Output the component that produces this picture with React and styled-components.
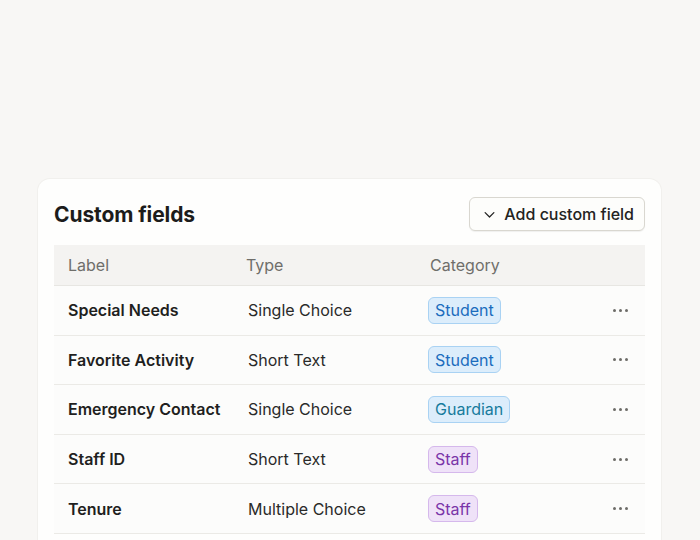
import React from 'react'
import styled, { createGlobalStyle } from 'styled-components'

const GlobalStyle = createGlobalStyle`
  html, body {
    margin: 0;
    background: #f8f7f5;
    font-family: Inter, "Noto Sans", sans-serif;
    color: #1f1f1e;
  }
`

const Page = styled.div`
  padding: 179px 39px 0 38px;
  block-size: 540px;
  box-sizing: border-box;
  overflow: hidden;
`

const Card = styled.section`
  background: #fefefd;
  border-radius: 12px;
  box-shadow: 0 0 0 1px #f1f0ed;
  padding: 18px 16px 40px;
`

const Header = styled.div`
  display: flex;
  align-items: center;
  justify-content: space-between;
  margin-block-end: 14px;

  h2 {
    margin: 0;
    font-size: 21px;
    font-weight: 700;
    letter-spacing: -0.1px;
    color: #1c1c1b;
  }
`

const AddButton = styled.button`
  display: flex;
  align-items: center;
  gap: 7px;
  block-size: 34px;
  padding: 0 10px 0 12px;
  background: #fdfdfb;
  border: 1px solid #d9d7d0;
  border-radius: 6px;
  box-shadow: 0 1px 1px rgba(0,0,0,0.06);
  font: 500 16px Inter, sans-serif;
  color: #232322;
  cursor: pointer;
`

const Table = styled.div`
  display: grid;
  grid-template-columns: 178px 184px 1fr 48px;
`

const HeadCell = styled.div`
  background: #f4f3f1;
  block-size: 40px;
  display: flex;
  align-items: center;
  padding-inline-start: 14px;
  font-size: 16px;
  color: #6f6e6a;
  border-bottom: 1px solid #e7e6e2;
`

const Cell = styled.div`
  block-size: 48.6px;
  display: flex;
  align-items: center;
  padding-inline-start: ${({ pad }) => pad || '14px'};
  font-size: 16px;
  font-weight: ${({ strong }) => (strong ? 600 : 400)};
  color: ${({ strong }) => (strong ? '#1f1f1e' : '#2a2a29')};
  background: #fcfcfb;
  border-bottom: 1px solid #ebeae6;
`

const tones = {
  Student: { bg: '#dcedfb', border: '#a9d2f3', color: '#1b6cbd' },
  Guardian: { bg: '#dcedfb', border: '#a9d2f3', color: '#177b9c' },
  Staff: { bg: '#efe2f8', border: '#d5b8ec', color: '#7a35a8' },
}

const Badge = styled.span`
  display: inline-flex;
  align-items: center;
  block-size: 27px;
  box-sizing: border-box;
  padding: 0 6px;
  border-radius: 6px;
  font-size: 16px;
  background: ${({ tone }) => tones[tone].bg};
  border: 1px solid ${({ tone }) => tones[tone].border};
  color: ${({ tone }) => tones[tone].color};
`

const Dots = styled.button`
  border: 0;
  background: none;
  padding: 0;
  display: flex;
  gap: 3px;
  cursor: pointer;

  span {
    inline-size: 3px;
    block-size: 3px;
    border-radius: 50%;
    background: #6d6c68;
  }
`

const rows = [
  { label: 'Special Needs', type: 'Single Choice', category: 'Student' },
  { label: 'Favorite Activity', type: 'Short Text', category: 'Student' },
  { label: 'Emergency Contact', type: 'Single Choice', category: 'Guardian' },
  { label: 'Staff ID', type: 'Short Text', category: 'Staff' },
  { label: 'Tenure', type: 'Multiple Choice', category: 'Staff' },
]

function ChevronDown() {
  return (
    <svg width="15" height="15" viewBox="0 0 24 24" fill="none" stroke="#232322" strokeWidth="2" strokeLinecap="round" strokeLinejoin="round">
      <path d="M5 9l7 7 7-7" />
    </svg>
  )
}

export default function App() {
  return (
    <Page>
      <GlobalStyle />
      <Card>
        <Header>
          <h2>Custom fields</h2>
          <AddButton>
            <ChevronDown />
            Add custom field
          </AddButton>
        </Header>
        <Table>
          <HeadCell>Label</HeadCell>
          <HeadCell>Type</HeadCell>
          <HeadCell>Category</HeadCell>
          <HeadCell />
          {rows.map((r) => (
            <React.Fragment key={r.label}>
              <Cell strong>{r.label}</Cell>
              <Cell pad="16px">{r.type}</Cell>
              <Cell pad="12px">
                <Badge tone={r.category}>{r.category}</Badge>
              </Cell>
              <Cell pad="16px">
                <Dots aria-label="More">
                  <span /><span /><span />
                </Dots>
              </Cell>
            </React.Fragment>
          ))}
        </Table>
      </Card>
    </Page>
  )
}
